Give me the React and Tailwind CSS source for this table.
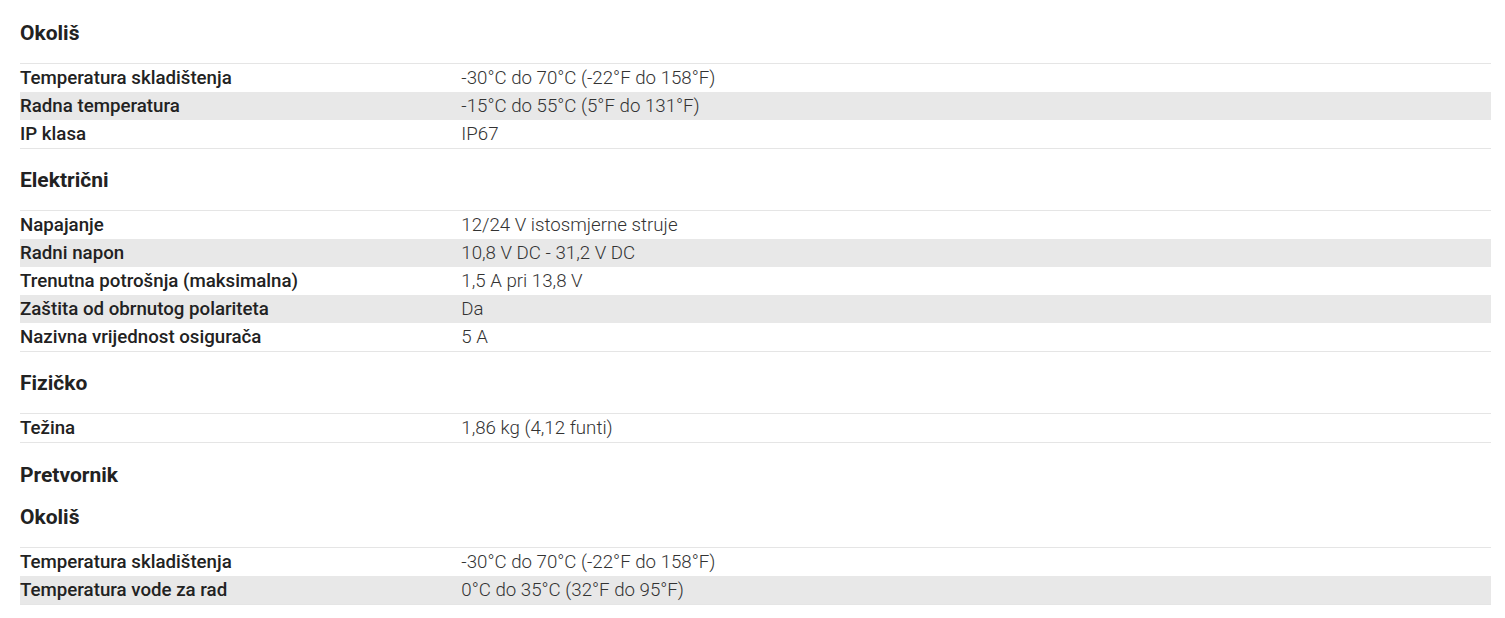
const sections = [
  {
    title: "Okoliš",
    first: true,
    rows: [
      ["Temperatura skladištenja", "-30°C do 70°C (-22°F do 158°F)"],
      ["Radna temperatura", "-15°C do 55°C (5°F do 131°F)"],
      ["IP klasa", "IP67"],
    ],
  },
  {
    title: "Električni",
    rows: [
      ["Napajanje", "12/24 V istosmjerne struje"],
      ["Radni napon", "10,8 V DC - 31,2 V DC"],
      ["Trenutna potrošnja (maksimalna)", "1,5 A pri 13,8 V"],
      ["Zaštita od obrnutog polariteta", "Da"],
      ["Nazivna vrijednost osigurača", "5 A"],
    ],
  },
  {
    title: "Fizičko",
    rows: [["Težina", "1,86 kg (4,12 funti)"]],
  },
  { title: "Pretvornik", group: true },
  {
    title: "Okoliš",
    after: true,
    rows: [
      ["Temperatura skladištenja", "-30°C do 70°C (-22°F do 158°F)"],
      ["Temperatura vode za rad", "0°C do 35°C (32°F do 95°F)"],
    ],
  },
];

function Heading({ s }) {
  let pad = "pt-[19px] pb-[18px]";
  if (s.first) pad = "pt-[21px] pb-[18px]";
  if (s.group) pad = "pt-[20px] pb-0";
  if (s.after) pad = "pt-[18px] pb-[18px]";
  return (
    <h3 className={`${pad} text-[21px] leading-6 font-bold text-[#222]`}>{s.title}</h3>
  );
}

export default function App() {
  return (
    <div
      className="w-[1505px] h-[618px] bg-white pl-5 pr-[14px] overflow-hidden"
      style={{ fontFamily: "Roboto, 'Liberation Sans', sans-serif" }}
    >
      {sections.map((s, i) => (
        <div key={i}>
          <Heading s={s} />
          {s.rows && (
            <div className="border-y border-[#e5e5e5]">
              {s.rows.map(([label, value], j) => (
                <div
                  key={label}
                  className={`grid grid-cols-[30%_70%] text-[18.7px] leading-7 ${j % 2 === 1 ? "bg-[#e8e8e8]" : ""}`}
                >
                  <span className="font-medium text-[#222]">{label}</span>
                  <span className="font-light text-[#333]">{value}</span>
                </div>
              ))}
            </div>
          )}
        </div>
      ))}
    </div>
  );
}
